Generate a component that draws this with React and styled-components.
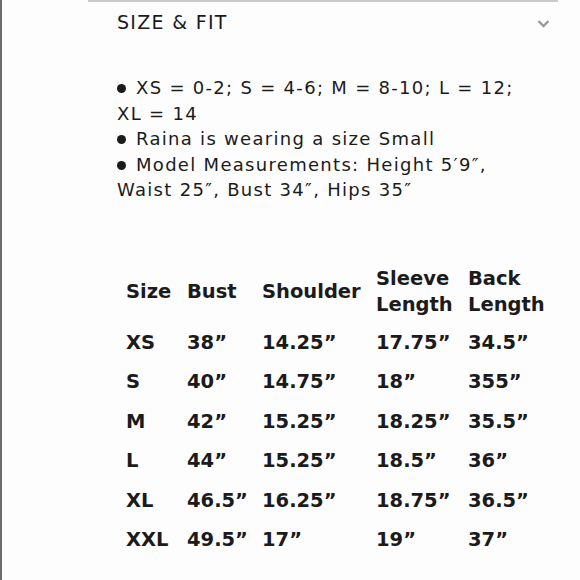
import React from "react";
import styled, { createGlobalStyle } from "styled-components";

const Global = createGlobalStyle`
  html, body { margin: 0; padding: 0; background: #fdfdfd; }
  body { width: 580px; height: 580px; overflow: hidden; }
`;

const Page = styled.div`
  width: 580px;
  height: 580px;
  box-sizing: border-box;
  border-left: 2px solid #6a6a6a;
  background: #fdfdfd;
  color: #1b1b1b;
  font-family: "DejaVu Sans", "Liberation Sans", sans-serif;
`;

const Section = styled.section`
  margin-left: 86px;
  width: 470px;
  border-top: 2px solid #c9c9c9;
`;

const Header = styled.div`
  display: flex;
  align-items: center;
  justify-content: space-between;
  padding: 8px 8px 0 29px;
  height: 24px;
`;

const Title = styled.h2`
  margin: 0;
  font-weight: 400;
  font-size: 19px;
  line-height: 24px;
  letter-spacing: 1.3px;
`;

const Chevron = styled.svg`
  width: 13px;
  height: 9px;
  margin-top: 2px;
`;

const Body = styled.div`
  padding: 41px 0 0 29px;
`;

const List = styled.ul`
  margin: 0;
  padding: 0;
  width: 405px;
  list-style: none;
  font-size: 18px;
  line-height: 25.5px;
  letter-spacing: 1.3px;
`;

const Item = styled.li`
  &::before {
    content: "";
    display: inline-block;
    width: 9px;
    height: 9px;
    border-radius: 50%;
    background: #1b1b1b;
    vertical-align: 1px;
    margin-right: 10px;
  }
`;

const Table = styled.div`
  margin: 58px 0 0 9px;
  font-weight: 700;
  font-size: 19.5px;
  letter-spacing: 0px;
`;

const Row = styled.div`
  display: grid;
  grid-template-columns: 61px 75px 114px 92px auto;
  align-items: center;
  height: ${(p) => (p.$head ? "62.5px" : "39.5px")};
  line-height: 26px;
  white-space: nowrap;
`;

const Cell = styled.div``;

const head = ["Size", "Bust", "Shoulder", ["Sleeve", "Length"], ["Back", "Length"]];
const rows = [
  ["XS", "38”", "14.25”", "17.75”", "34.5”"],
  ["S", "40”", "14.75”", "18”", "355”"],
  ["M", "42”", "15.25”", "18.25”", "35.5”"],
  ["L", "44”", "15.25”", "18.5”", "36”"],
  ["XL", "46.5”", "16.25”", "18.75”", "36.5”"],
  ["XXL", "49.5”", "17”", "19”", "37”"],
];

export default function App() {
  return (
    <>
      <Global />
      <Page>
        <Section>
          <Header>
            <Title>SIZE &amp; FIT</Title>
            <Chevron viewBox="0 0 13 9">
              <path d="M1.5 2 L6.5 7 L11.5 2" fill="none" stroke="#9a9a9a" strokeWidth="2.4" />
            </Chevron>
          </Header>
          <Body>
            <List>
              <Item>XS = 0-2; S = 4-6; M = 8-10; L = 12; XL = 14</Item>
              <Item>Raina is wearing a size Small</Item>
              <Item>Model Measurements: Height 5′9″, Waist 25″, Bust 34″, Hips 35″</Item>
            </List>
            <Table>
              <Row $head>
                {head.map((h, i) => (
                  <Cell key={i}>
                    {Array.isArray(h) ? (
                      <>
                        {h[0]}
                        <br />
                        {h[1]}
                      </>
                    ) : (
                      h
                    )}
                  </Cell>
                ))}
              </Row>
              {rows.map((r) => (
                <Row key={r[0]}>
                  {r.map((c, i) => (
                    <Cell key={i}>{c}</Cell>
                  ))}
                </Row>
              ))}
            </Table>
          </Body>
        </Section>
      </Page>
    </>
  );
}
